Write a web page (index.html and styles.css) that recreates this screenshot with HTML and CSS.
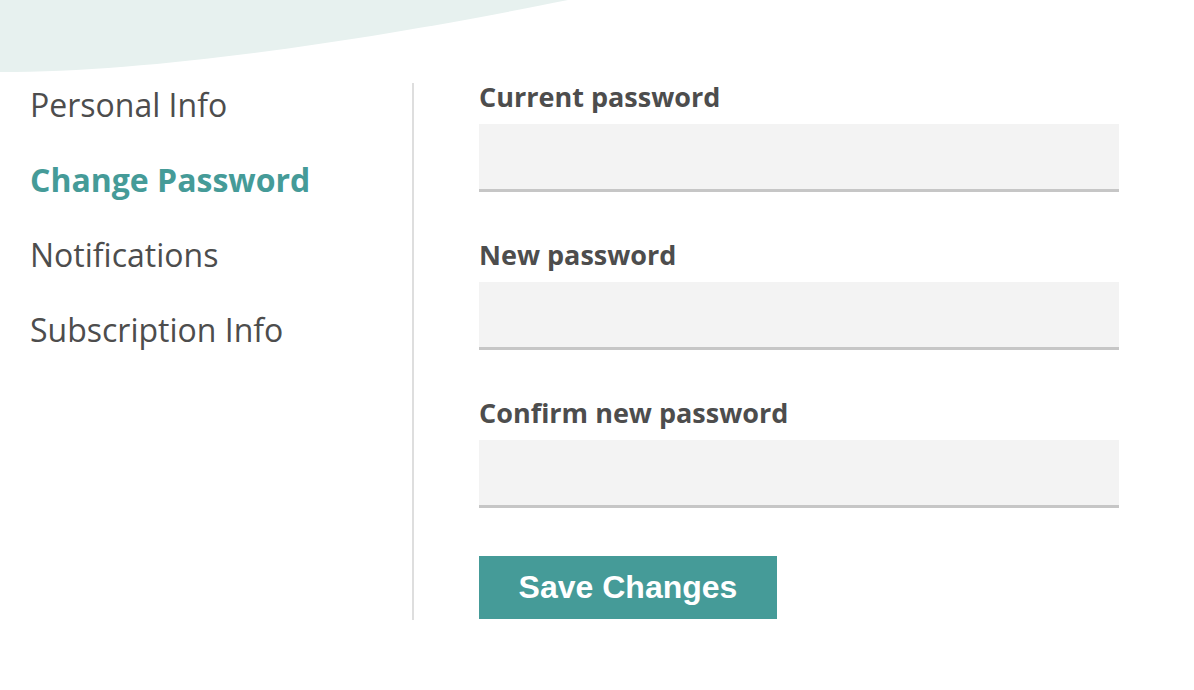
FILE: index.html
```html
<!DOCTYPE html>
<html>
<head>
    <meta charset="UTF-8">
    <title>Account Settings</title>
    <link rel="stylesheet" href="styles.css">
</head>

<body>
    <svg class="wave" width="600" height="80" viewBox="0 0 600 80">
        <path d="M0 0 H568 C420 30 180 72 0 72 Z" fill="#e7f1ef" />
    </svg>

    <div class="settings">
        <ul class="menu">
            <li><a href="#">Personal Info</a></li>
            <li><a href="#" class="active">Change Password</a></li>
            <li><a href="#">Notifications</a></li>
            <li><a href="#">Subscription Info</a></li>
        </ul>

        <form class="password-form">
            <div class="field">
                <label for="current">Current password</label>
                <input type="password" id="current">
            </div>
            <div class="field">
                <label for="new">New password</label>
                <input type="password" id="new">
            </div>
            <div class="field">
                <label for="confirm">Confirm new password</label>
                <input type="password" id="confirm">
            </div>
            <button type="button" class="save-btn">Save Changes</button>
        </form>
    </div>
</body>
</html>
```

FILE: styles.css
```css
body {
    margin: 0;
    font-family: "Open Sans", sans-serif;
    color: #4d4d4d;
    background: white;
}
.wave { position: absolute; left: 0; top: 0; z-index: -1; }

.settings { display: flex; padding-top: 83px; }

.menu {
    list-style: none;
    margin: 0;
    padding: 0 0 0 30px;
    width: 382px;
    height: 537px;
    border-right: 2px solid #dedede;
}
.menu li { height: 75px; }
.menu a {
    display: block;
    color: #4d4d4d;
    text-decoration: none;
    font-size: 32px;
    line-height: 44px;
}
.menu a.active { color: #459b98; font-weight: bold; }

.password-form { padding-left: 65px; width: 640px; }
.field { margin-bottom: 46px; }
.field:first-child { margin-top: -3px; }
.field label {
    display: block;
    font-weight: bold;
    font-size: 27px;
    line-height: 34px;
    margin-bottom: 10px;
}
.field input {
    display: block;
    box-sizing: border-box;
    width: 640px;
    height: 68px;
    border: none;
    border-bottom: 3px solid #c6c6c6;
    background: #f3f3f3;
    outline: none;
}
.save-btn {
    display: block;
    width: 298px;
    height: 63px;
    margin-top: 48px;
    border: none;
    background: #459b98;
    color: white;
    font-family: "Liberation Sans", Arial, sans-serif;
    font-weight: bold;
    font-size: 32px;
}
```
